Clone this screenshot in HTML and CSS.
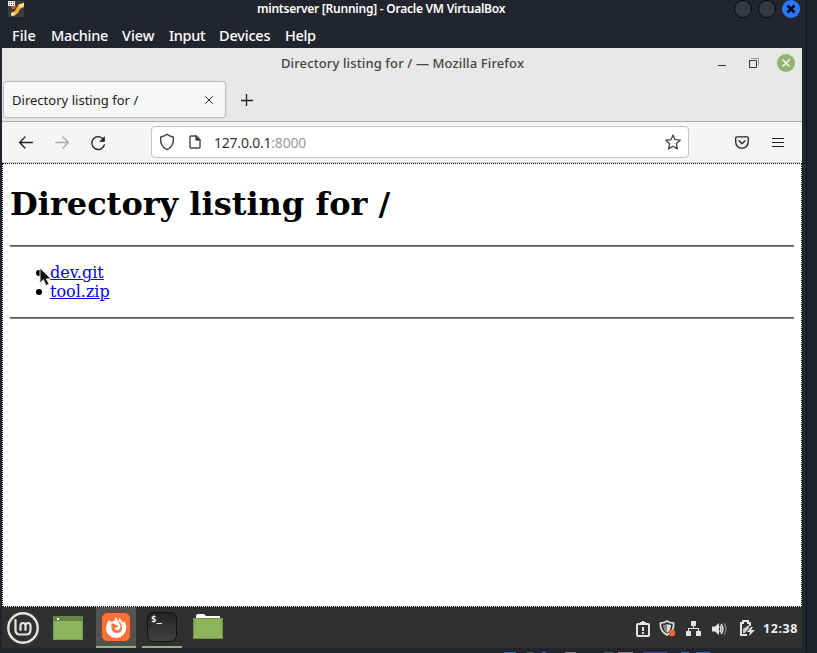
FILE: index.html
```html
<!DOCTYPE html>
<html lang="en">
<head>
<meta charset="utf-8">
<title>mintserver [Running] - Oracle VM VirtualBox</title>
<link rel="stylesheet" href="styles.css">
</head>
<body>
<div class="desktop">
  <div class="vm">
    <header class="vm-title">
      <svg class="vm-logo" width="16" height="16" viewBox="0 0 16 16"><path fill="#393b43" d="M0 0h16v16H0z"/><path fill="#d85319" d="M3 3h4l1 2-1 3H4L3 6z"/><path fill="#ffad29" d="M3 15v-3l4-2 2-4 2-3 5-1v4l-4 2-2 4-4 3z"/><path fill="#ffe59b" d="M11 4l5-2v3l-4 2zM3 12l3-1 2 2-4 2z"/><path fill="#eee" d="M0 0h7v5H0z"/><path stroke="#777" d="M1 1.500h5M1 3.500h5" stroke-dasharray="1 1"/></svg>
      <span class="vm-name">mintserver [Running] - Oracle VM VirtualBox</span>
      <div class="vm-controls"><i></i><i></i><i class="close"><svg width="18" height="18" viewBox="0 0 18 18"><path d="M5.500 5.500l7 7m0-7l-7 7" stroke="#080b16" stroke-width="2.700"/></svg></i></div>
    </header>
    <nav class="vm-menu"><span class="m-file">File</span><span class="m-machine">Machine</span><span class="m-view">View</span><span class="m-input">Input</span><span class="m-devices">Devices</span><span class="m-help">Help</span></nav>
    <main class="screen">
      <div class="ff-title"><span class="ff-name">Directory listing for / — Mozilla Firefox</span>
        <svg class="ff-controls" width="82" height="20" viewBox="0 0 82 20"><path d="M4 12.500h8" stroke="#333"/><path d="M37 5.500h7.500v7" fill="none" stroke="#999"/><path d="M35.500 7.500h7v7h-7z" fill="none" stroke="#333"/><circle cx="72" cy="10" r="9" fill="#92b372"/><path d="M68.500 6.500l7 7m0-7l-7 7" stroke="#fff" stroke-width="1.300"/></svg>
      </div>
      <div class="tabs">
        <div class="tab"><span class="tab-name">Directory listing for /</span><svg width="10" height="10" viewBox="0 0 10 10"><path d="M1.200 1.200l7.600 7.600m0-7.600L1.200 8.800" stroke="#333"/></svg></div>
        <svg class="plus" width="12" height="12" viewBox="0 0 12 12"><path d="M0 6.500h12M5.500 0v12" stroke="#222" stroke-width="1.300"/></svg>
      </div>
      <div class="toolbar">
        <svg class="nav-icons" width="92" height="18" viewBox="0 0 92 18" fill="none" stroke="#222" stroke-width="1.350" stroke-linecap="round" stroke-linejoin="round"><path d="M15.500 8.500h-13M8 3L2.500 8.500 8 14"/><path stroke="#aaa" d="M38.500 8.500h13M46 3l5.500 5.500L46 14"/><path d="M86.500 5.500a6.400 6.400 0 1 0 .8 5.500"/><path d="M87.500 3v4.500H83z" fill="#222" stroke-width=".7"/></svg>
        <div class="url">
          <svg width="16" height="18" viewBox="0 0 16 18" fill="none" stroke="#444" stroke-width="1.400" stroke-linejoin="round"><path d="M8 1.300Q10 3.300 14.300 4c.6 6-1.300 10.500-6.300 12.700C3 14.500 1.100 10 1.700 4 6 3.300 8 1.300 8 1.300z"/></svg>
          <svg class="doc" width="12" height="14" viewBox="0 0 12 14" fill="none" stroke="#444" stroke-width="1.400" stroke-linejoin="round"><path d="M2 1h5l4 4v7q0 1-1 1H2q-1 0-1-1V2q0-1 1-1z"/><path d="M7 1v4h4z" fill="#444"/></svg>
          <span class="address">127.0.0.1<span>:8000</span></span>
          <svg class="star" width="16" height="16" viewBox="0 0 16 16"><path d="M8 1l2 4.700 5.200.5-3.900 3.500 1.100 5.200L8 12.300l-4.400 2.600 1.100-5.200L.8 6.200 6 5.700z" fill="none" stroke="#444" stroke-width="1.300" stroke-linejoin="round"/></svg>
        </div>
        <svg class="pocket" width="14" height="13" viewBox="0 0 14 13" fill="none" stroke="#222" stroke-width="1.300" stroke-linecap="round" stroke-linejoin="round"><path d="M2 .8h10q1.300 0 1.300 1.300v4a6.300 6.100 0 0 1-12.600 0v-4Q.7.800 2 .8zM4 4.800l3 2.900 3-2.900"/></svg>
        <svg class="burger" width="12" height="11" viewBox="0 0 12 11"><path d="M0 1.500h12M0 5.500h12M0 9.500h12" stroke="#222" stroke-width="1.200"/></svg>
      </div>
      <section class="page">
        <h1>Directory listing for /</h1><hr>
        <ul><li><a href="#">dev.git</a></li><li><a href="#">tool.zip</a></li></ul><hr>
        <svg class="cursor" width="13" height="20" viewBox="0 0 13 20"><path d="M1 1v15l3.500-3.300L7 18.500l3-1.400-2.600-5.200H12z" fill="#111" stroke="#ddd"/></svg>
      </section>
      <footer class="panel">
        <div class="launch"><svg width="32" height="32" viewBox="0 0 32 32" fill="none" stroke="#e4e4e4"><circle cx="16" cy="16" r="14.700" stroke-width="2.400"/><path d="M8.500 8v10q0 4.500 4.500 4.500h6q4.500 0 4.500-4.500v-4q0-3-2.500-3t-2.500 3v4m0-4q0-3-2.500-3t-2.500 3v4" stroke-width="2.200" stroke-linecap="round"/></svg></div>
        <div class="launch"><svg width="30" height="24" viewBox="0 0 30 24"><path fill="#8db35b" d="M0 0h30v24H0z"/><path fill="#688346" d="M0 0h30v5H0z"/><path fill="#fff" d="M4 2h2v2H4z"/><path d="M.5.500h29v23H.5z" fill="none" stroke="#69903f" stroke-opacity=".6"/></svg></div>
        <div class="launch active"><svg width="30" height="30" viewBox="0 0 30 30"><rect x=".5" y=".5" width="29" height="29" rx="6" fill="#ff7139" stroke="#784328"/><path fill="#fff" d="M8 8l2 2 3-1 2-4q1 3 3 4V6q3 2 4 5l1-2q3 4 2 8a10 9 0 0 1-20 0q0-5 3-9z"/><path fill="#ff7139" d="M10.500 11.500q3-.5 4 1.500l3 .5q-1 2-3 2l-1 1q1 2.500 4 1.500 3-2 1.500-5.500-1-2.500-3-4 5 2 5 7 0 5-4.500 5.500-5.500 0-6-5-.5-3 0-4.500z"/></svg></div>
        <div class="launch running"><svg width="30" height="30" viewBox="0 0 30 30"><defs><linearGradient id="terminal" x2="0" y2="1"><stop stop-color="#232323"/><stop offset="1" stop-color="#414141"/></linearGradient></defs><rect x=".5" y=".5" width="29" height="29" rx="6" fill="url(#terminal)" stroke="#111"/><text class="prompt" x="4" y="10">$_</text></svg></div>
        <div class="launch"><svg width="30" height="25" viewBox="0 0 30 25"><path fill="#fff" d="M3 5V2q0-2 2-2h6l2 2h14v5H3z"/><rect y="4" width="30" height="21" rx="1" fill="#8db35b"/><path d="M.5 4.500h29v20H.5z" fill="none" stroke="#709244"/></svg></div>
        <div class="tray">
          <svg width="14" height="16" viewBox="0 0 14 16" fill="none" stroke="#e4e4e4" stroke-width="2"><rect x="1" y="3" width="12" height="12" rx="1"/><path d="M4 2h6M7 0v2M7 6v4M7 11v2"/></svg>
          <svg width="17" height="17" viewBox="0 0 17 17"><path d="M8 1q2 2 6.500 2 1 8-6.500 12Q.5 11 1.500 3 6 3 8 1z" fill="none" stroke="#e4e4e4" stroke-width="1.700"/><path d="M8 4v9Q4 10 4 5q3 0 4-1z" fill="#888"/><path d="M8 4q2 1 4 1 0 5-4 8z" fill="#ddd"/><circle cx="13" cy="13" r="3.300" fill="#e66b31"/></svg>
          <svg width="15" height="15" viewBox="0 0 15 15" fill="#e4e4e4"><path d="M5 0h5v5H5zM0 10h5v5H0zM10 10h5v5h-5zM7 4h1v3H7zM2 7h11v3h-1V8H3v2H2z"/></svg>
          <svg class="volume" width="16" height="14" viewBox="0 0 16 14" fill="none"><path d="M0 4.500h3L7 1v12L3 9.500H0z" fill="#e4e4e4"/><path d="M8 4q2 3 0 6m1-8q4 5 0 10" stroke="#e4e4e4" stroke-width="1.500"/><path d="M12 1q4 6 0 12" stroke="#777" stroke-width="1.500"/></svg>
          <svg class="battery" width="15" height="17" viewBox="0 0 15 17" fill="none"><path d="M7 15H1V3h2V1h5v2h2v3" stroke="#e4e4e4" stroke-width="2"/><path d="M3 13V9l6-4v3l-4 5z" fill="#ccc"/><path d="M11 7L7 12h3l-1 4 6-6h-4l2-3z" fill="#e4e4e4"/></svg>
          <span class="clock">12:38</span>
        </div>
      </footer>
    </main>
    <div class="under"><i class="b1"></i><i class="b2"></i><i class="b3"></i><i class="b4"></i><i class="b5"></i><i class="b6"></i><i class="b7"></i><i class="b8"></i><i class="b9"></i></div>
  </div>
  <aside class="backdrop"></aside>
</div>
</body>
</html>
```
FILE: styles.css
```css
* { box-sizing: border-box; }
body { margin: 0; background: #202631; font-family: "Noto Sans", sans-serif; overflow: hidden; }
.desktop { display: flex; width: 817px; height: 653px; }
.vm { width: 806px; height: 653px; background: #23252e; }
.backdrop { flex: 1; background: #20232b; border-left: 1px solid #11141a; }
.vm-title { height: 20px; display: flex; align-items: flex-start; padding-left: 8px; color: #fff; }
.vm-name { width: 249px; margin-left: 233px; font: 600 12px/18px "Noto Sans", sans-serif; white-space: nowrap; letter-spacing: -.24px; }
.vm-logo { margin-top: 1px; }
.vm-controls { display: flex; gap: 6px; margin-left: auto; margin-right: 6px; }
.vm-controls i { width: 18px; height: 18px; border: 1px solid #080a10; border-radius: 50%; background: #343843; }
.vm-controls .close { border: 0; background: #2777ff; }
.vm-controls svg { display: block; }
.vm-menu { display: flex; height: 28px; padding-left: 12px; color: #fff; font: 500 14.5px/31px "Noto Sans", sans-serif; letter-spacing: -.32px; }
.m-file { width: 39px; letter-spacing: 0; }
.m-machine { width: 71px; }
.m-view { width: 47px; letter-spacing: 0; }
.m-input { width: 50px; }
.m-devices { width: 66px; letter-spacing: -.2px; }
.screen { display: flex; flex-direction: column; width: 800px; height: 600px; margin-left: 2px; background: #fff; }
.ff-title { display: flex; height: 33px; background: #e8e8e8; padding-left: 279px; color: #444; }
.ff-name { width: 243px; white-space: nowrap; font: 500 13px/30px "Noto Sans", sans-serif; letter-spacing: .12px; }
.ff-controls { margin: 5px 6px 0 auto; }
.tabs { display: flex; height: 41px; background: #e8e8e8; border-bottom: 1px solid #aaa; }
.tab { display: flex; align-items: center; width: 223px; height: 37px; margin-left: 1px; padding: 0 11px 0 8px; border: 1px solid #bdbdc2; border-radius: 4px; background: #f7f7f7; box-shadow: 0 0 2px #ccc; color: #222; }
.tab-name { width: 127px; font: 13px/18px "Noto Sans", sans-serif; letter-spacing: .02px; white-space: nowrap; }
.tab svg { margin-left: auto; }
.plus { margin: 13px 0 0 15px; }
.toolbar { display: flex; align-items: center; height: 41px; background: #f5f5f5; border-bottom: 1px solid #d0d0d0; }
.nav-icons { margin: 1px 0 0 15px; }
.url { display: flex; align-items: center; width: 538px; height: 32px; margin-left: 42px; padding-left: 7px; border: 1px solid #c6c6c6; border-radius: 4px; background: #fff; }
.doc { margin-left: 14px; }
.address { margin: 1px 0 0 13px; width: 94px; color: #333; font: 14px/20px "Noto Sans", sans-serif; letter-spacing: -.22px; }
.address span { color: #999; }
.star { margin-left: auto; margin-right: 7px; }
.pocket { margin-left: 46px; }
.burger { margin-left: 23px; }
.page { position: relative; height: 444px; padding: 0 7px; border: 1px dotted #000; background: #fff; color: #000; font: 16px/19px "DejaVu Serif", serif; }
h1 { margin: 21px 0; font: bold 32px/39px "DejaVu Serif", serif; }
hr { margin: 0; height: 2px; border: 0; border-top: 1px solid #555; background: #888; }
ul { margin: 16px 0; padding-left: 26px; list-style: none; }
li { display: flex; align-items: center; gap: 8px; }
li::before { content: ""; width: 6px; height: 6px; border-radius: 50%; background: #000; margin-top: 1px; }
a { color: #0000ee; text-decoration-thickness: 1px; }
.cursor { position: absolute; left: 36px; top: 103px; }
.panel { display: flex; height: 41px; padding-left: 1px; background: #303030; align-items: stretch; }
.launch { display: flex; width: 40px; margin-right: 6px; align-items: center; justify-content: center; border-bottom: 2px solid transparent; padding-top: 1px; }
.launch:first-child { margin-right: 5px; padding-top: 2px; }
.launch:nth-child(2) { margin-right: 8px; padding-top: 2px; }
.launch:nth-child(5) { padding-top: 0; }
.active { background: #535353; border-color: #92b372; }
.running { border-color: #92b372; }
.prompt { fill: #fff; font: bold 9px "DejaVu Sans Mono", monospace; }
.tray { display: flex; align-items: center; gap: 10px; margin-left: auto; padding-right: 4px; padding-top: 2px; }
.tray svg:nth-child(2) { margin-left: -1px; }
.tray .volume { margin-left: 1px; }
.battery { margin-left: 2px; }
.clock { width: 35px; margin-left: -2px; color: #eee; font: bold 12.5px/20px "Noto Sans", sans-serif; letter-spacing: .55px; }
.under { display: flex; align-items: flex-end; height: 5px; }
.under i { height: 1px; background: #356fba; }
.b1 { width: 12px; margin-left: 504px; }
.under .b2 { width: 7px; margin-left: 11px; background: #53545e; }
.b3 { width: 4px; margin-left: 8px; }
.under .b4 { width: 11px; margin-left: 19px; background: #8b7b82; }
.under .b5 { width: 10px; margin-left: 28px; background: #53545e; }
.under .b6 { width: 15px; margin-left: 4px; background: #8b7b82; }
.under .b7 { width: 24px; margin-left: 10px; background: #4543a5; }
.b8 { width: 8px; margin-left: 14px; }
.b9 { width: 14px; margin-left: 7px; }
```
